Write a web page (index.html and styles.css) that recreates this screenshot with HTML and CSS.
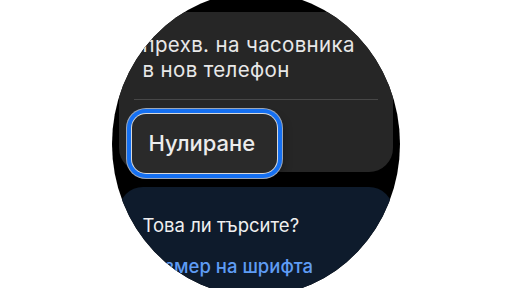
FILE: index.html
```html
<!DOCTYPE html>
<html lang="bg">
<head>
    <meta charset="UTF-8">
    <meta name="viewport" content="width=device-width, initial-scale=1.0">
    <title>Нулиране</title>
    <link rel="stylesheet" href="styles.css">
</head>
<body>
<div class="watch">
    <div class="screen">
        <div class="card reset-card">
            <p class="card-text">прехв. на часовника<br>в нов телефон</p>
            <div class="divider"></div>
            <button class="reset-button">Нулиране</button>
        </div>
        <div class="card suggest-card">
            <p class="suggest-title">Това ли търсите?</p>
            <a class="suggest-link" href="#">Размер на шрифта</a>
        </div>
    </div>
</div>
</body>
</html>
```

FILE: styles.css
```css
* {
    box-sizing: border-box;
    margin: 0;
    padding: 0;
}

body {
    background-color: #ffffff;
    font-family: Inter, Roboto, Arial, sans-serif;
    overflow: hidden;
}

.watch {
    display: flex;
    justify-content: center;
    height: 288px;
}

.screen {
    width: 288px;
    height: 304px;
    margin-top: -8px;
    border-radius: 50%;
    background-color: #000000;
    overflow: hidden;
    display: flex;
    flex-direction: column;
    align-items: center;
    padding-top: 20px;
    gap: 15px;
}

.card {
    width: 274px;
    flex-shrink: 0;
    border-radius: 24px;
}

.reset-card {
    height: 160px;
    background-color: #262626;
    padding: 20px 15px 0;
    border-radius: 0 0 24px 24px;
}

.card-text {
    padding-left: 9px;
    font-size: 20.5px;
    line-height: 25px;
    letter-spacing: 0.35px;
    color: #e8e8e8;
    white-space: nowrap;
}

.divider {
    height: 1px;
    margin-top: 17px;
    background-color: #474747;
}

.reset-button {
    display: flex;
    align-items: center;
    width: 145px;
    height: 59px;
    margin: 14px 0 0 -2px;
    padding: 0 0 2px 17px;
    border: none;
    border-radius: 14px;
    background-color: #2a2a2a;
    color: #ececec;
    font-family: inherit;
    font-size: 22px;
    font-weight: 500;
    box-shadow: 0 0 0 1px #d8d8d8, 0 0 0 5px #1570f2, 0 0 0 6px #9aa6b8, 6px 4px 10px rgba(0, 0, 0, 0.35);
}

.suggest-card {
    height: 120px;
    background-color: #0e1b2c;
    padding: 26px 24px 0;
}

.suggest-title {
    font-size: 18.5px;
    line-height: 25px;
    color: #f0f0f0;
}

.suggest-link {
    display: block;
    margin-top: 16px;
    font-size: 18.5px;
    line-height: 25px;
    font-weight: 500;
    color: #5e9cf4;
    text-decoration: none;
    white-space: nowrap;
}
```
